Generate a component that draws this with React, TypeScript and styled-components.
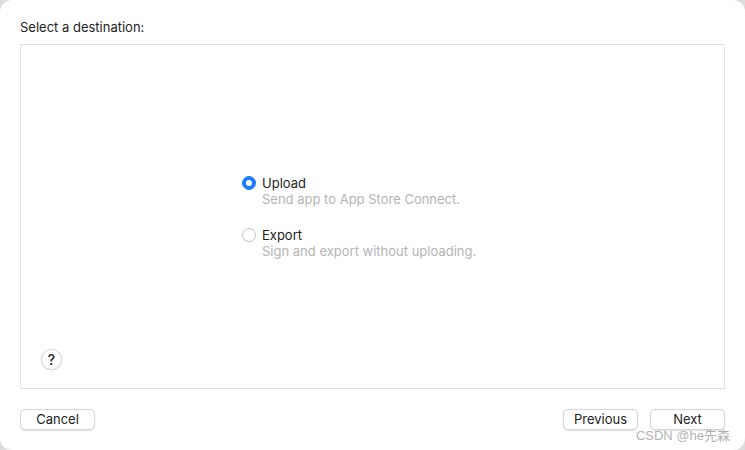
import React, { useState } from "react";
import styled, { createGlobalStyle } from "styled-components";

const GlobalStyle = createGlobalStyle`
  html, body {
    margin: 0;
    padding: 0;
    width: 100%;
    height: 100%;
    background: #dcdcdc;
  }
  #root {
    height: 100%;
  }
`;

const Sheet = styled.div`
  position: relative;
  box-sizing: border-box;
  width: 745px;
  height: 450px;
  background: #ffffff;
  border-radius: 12px;
  padding: 18px 20px 20px;
  display: flex;
  flex-direction: column;
  font-family: "Inter", "Liberation Sans", sans-serif;
  font-size: 13px;
  color: #232323;
  overflow: hidden;
`;

const Title = styled.div`
  height: 19px;
  line-height: 19px;
  margin-bottom: 7px;
`;

const Panel = styled.div`
  flex: 1;
  display: flex;
  flex-direction: column;
  border: 1px solid #e2e2e2;
  background: #ffffff;
  padding: 0 0 18px 20px;
  min-height: 0;
`;

const Options = styled.div`
  flex: 1;
  display: flex;
  flex-direction: column;
  justify-content: center;
  gap: 20px;
  padding-left: 201px;
  padding-top: 40px;
`;

const Option = styled.label`
  display: grid;
  grid-template-columns: 14px auto;
  column-gap: 6px;
  align-items: center;
  cursor: default;
`;

const Radio = styled.span<{ $checked: boolean }>`
  box-sizing: border-box;
  width: 14px;
  height: 14px;
  border-radius: 50%;
  display: flex;
  align-items: center;
  justify-content: center;
  background: ${(p) => (p.$checked ? "#1b7ef6" : "#ffffff")};
  border: 1px solid ${(p) => (p.$checked ? "#1b7ef6" : "#c4c4c4")};
  box-shadow: ${(p) => (p.$checked ? "none" : "0 0.5px 1px rgba(0,0,0,0.08)")};

  &::after {
    content: "";
    display: ${(p) => (p.$checked ? "block" : "none")};
    width: 6px;
    height: 6px;
    border-radius: 50%;
    background: #ffffff;
  }
`;

const Label = styled.span`
  line-height: 16px;
  color: #1e1e1e;
`;

const Sub = styled.span`
  grid-column: 2;
  line-height: 16px;
  color: #b4b4b4;
`;

const HelpRow = styled.div`
  display: flex;
`;

const HelpButton = styled.button`
  box-sizing: border-box;
  width: 21px;
  height: 21px;
  border-radius: 50%;
  border: 1px solid #dadada;
  background: #ffffff;
  box-shadow: 0 0.5px 1.5px rgba(0, 0, 0, 0.15);
  font-family: "Inter", "Liberation Sans", sans-serif;
  font-size: 14px;
  font-weight: 500;
  color: #222;
  padding: 0;
  display: flex;
  align-items: center;
  justify-content: center;
`;

const Footer = styled.div`
  display: flex;
  align-items: center;
  margin-top: 20px;
  gap: 12px;
`;

const Spacer = styled.div`
  flex: 1;
`;

const Button = styled.button`
  box-sizing: border-box;
  width: 75px;
  height: 21px;
  border-radius: 5px;
  border: 1px solid #d6d6d6;
  background: #ffffff;
  box-shadow: 0 0.5px 1px rgba(0, 0, 0, 0.12);
  font-family: "Inter", "Liberation Sans", sans-serif;
  font-size: 13px;
  line-height: 19px;
  color: #222;
  padding: 0 0 1px;
`;

const Watermark = styled.div`
  position: absolute;
  right: 15px;
  bottom: 6px;
  font-family: "Liberation Sans", "Noto Sans CJK SC", sans-serif;
  font-size: 13px;
  color: rgba(150, 150, 150, 0.75);
  pointer-events: none;
`;

const options = [
  { id: "upload", label: "Upload", sub: "Send app to App Store Connect." },
  { id: "export", label: "Export", sub: "Sign and export without uploading." },
];

export default function App() {
  const [selected, setSelected] = useState("upload");

  return (
    <>
      <GlobalStyle />
      <Sheet>
        <Title>Select a destination:</Title>
        <Panel>
          <Options>
            {options.map((o) => (
              <Option key={o.id} onClick={() => setSelected(o.id)}>
                <Radio $checked={selected === o.id} />
                <Label>{o.label}</Label>
                <Sub>{o.sub}</Sub>
              </Option>
            ))}
          </Options>
          <HelpRow>
            <HelpButton>?</HelpButton>
          </HelpRow>
        </Panel>
        <Footer>
          <Button>Cancel</Button>
          <Spacer />
          <Button>Previous</Button>
          <Button>Next</Button>
        </Footer>
        <Watermark>CSDN @he先森</Watermark>
      </Sheet>
    </>
  );
}
